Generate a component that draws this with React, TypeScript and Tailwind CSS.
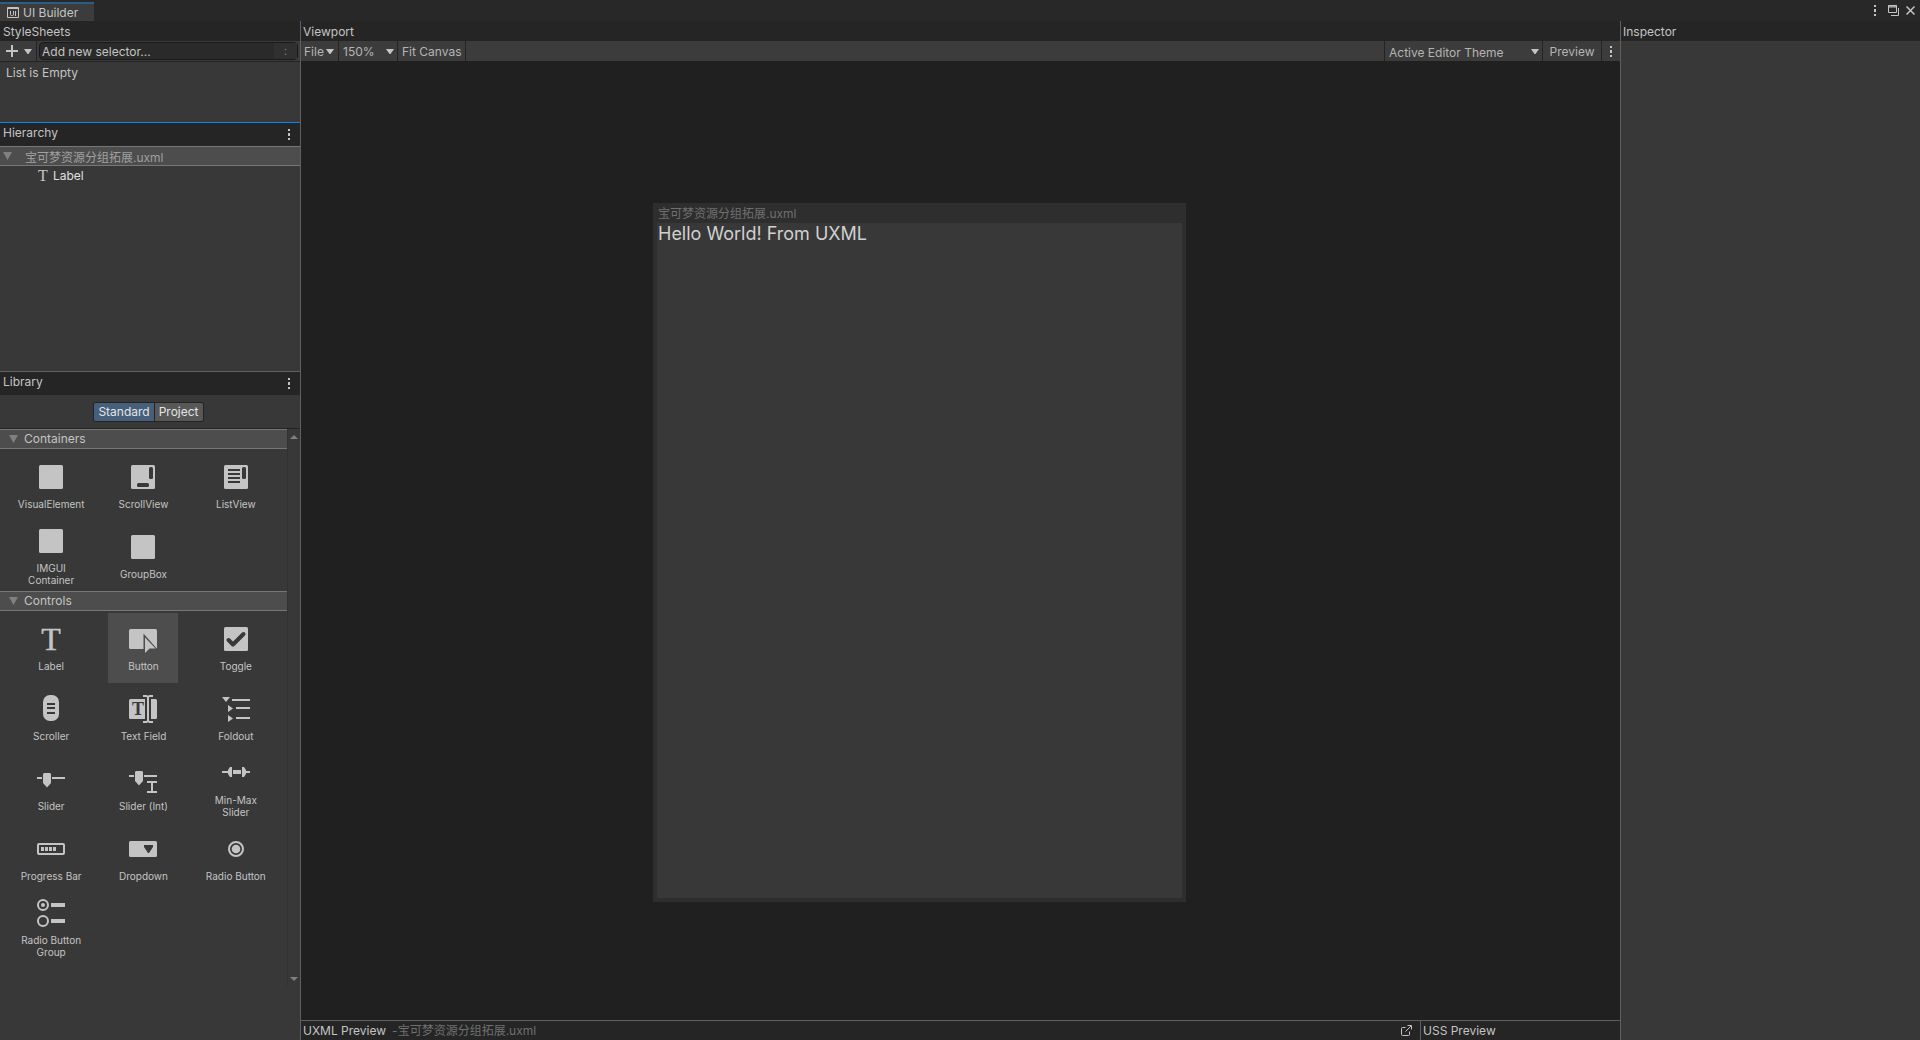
import { useState } from 'react';
import type { ReactNode } from 'react';

const FILE_NAME = '宝可梦资源分组拓展.uxml';

type LibraryItem = {
    key: string;
    label: string;
    icon: ReactNode;
};

const INK = '#c4c4c4';
const PANEL = '#383838';

const CONTAINERS: LibraryItem[] = [
    { key: 'visual-element', label: 'VisualElement', icon: <rect x="4" y="4" width="24" height="24" rx="1.5" /> },
    {
        key: 'scroll-view',
        label: 'ScrollView',
        icon: (
            <>
                <rect x="4" y="4" width="24" height="24" rx="1.5" />
                <rect x="22" y="6" width="4" height="12" rx="1.5" fill={PANEL} />
                <rect x="10" y="22" width="12" height="4" rx="1.5" fill={PANEL} />
            </>
        ),
    },
    {
        key: 'list-view',
        label: 'ListView',
        icon: (
            <>
                <rect x="4" y="4" width="24" height="24" rx="1.5" />
                <rect x="22" y="6" width="4" height="12" rx="1.5" fill={PANEL} />
                <path d="M8 9h12M8 13h12M8 17h12M8 21h12" stroke={PANEL} strokeWidth="2" />
            </>
        ),
    },
    { key: 'imgui', label: 'IMGUI Container', icon: <rect x="4" y="4" width="24" height="24" rx="1.5" /> },
    { key: 'group-box', label: 'GroupBox', icon: <rect x="4" y="4" width="24" height="24" rx="1.5" /> },
];

const CONTROLS: LibraryItem[] = [
    {
        key: 'label',
        label: 'Label',
        icon: <text x="16" y="27" fontSize="32" textAnchor="middle" fontFamily="Liberation Serif, serif" stroke={INK} strokeWidth="0.4">T</text>,
    },
    {
        key: 'button',
        label: 'Button',
        icon: (
            <>
                <rect x="2" y="6" width="28" height="20" rx="1.5" />
                <path d="M16.5 10.5V31h2.5l4.5-4H31z" fill="#4d4d4d" />
                <path d="M18 14.500V30l4.500-4.500H28.500z" />
                <path d="M19 11L30 22V12H19z" />
            </>
        ),
    },
    {
        key: 'toggle',
        label: 'Toggle',
        icon: (
            <>
                <rect x="4" y="4" width="24" height="24" rx="1.5" />
                <path d="M8.500 17l4.500 4.500L23.500 11" fill="none" stroke={PANEL} strokeWidth="4" strokeLinecap="round" strokeLinejoin="round" />
            </>
        ),
    },
    {
        key: 'scroller',
        label: 'Scroller',
        icon: (
            <>
                <rect x="8" y="2" width="16" height="26" rx="7" />
                <path d="M12 11h8M12 15h8M12 20h8" stroke={PANEL} strokeWidth="2" />
            </>
        ),
    },
    {
        key: 'text-field',
        label: 'Text Field',
        icon: (
            <>
                <rect x="2" y="6" width="28" height="20" rx="1.5" />
                <rect x="18" y="6" width="6" height="20" fill={PANEL} />
                <text x="11" y="22" fontSize="18" fontWeight="bold" textAnchor="middle" fill={PANEL} fontFamily="Liberation Serif, serif">T</text>
                <path d="M16 3h3.500l1.500 1l1.500-1H26M21 3v26M16 29h3.500l1.500-1l1.500 1H26" fill="none" stroke={INK} strokeWidth="2" />
            </>
        ),
    },
    {
        key: 'foldout',
        label: 'Foldout',
        icon: (
            <>
                <path d="M2 4h8L6 9zM8 12l5 3.500l-5 3.500zM8 22l5 3.500l-5 3.500z" />
                <path d="M12 7h18M16 15h14M16 25h14" stroke={INK} strokeWidth="2" />
            </>
        ),
    },
    {
        key: 'slider',
        label: 'Slider',
        icon: (
            <>
                <path d="M2 15h5M17 15h13" stroke={INK} strokeWidth="2" />
                <path d="M9 10h6l1 1v9l-4 4.500L8 20v-9z" />
            </>
        ),
    },
    {
        key: 'slider-int',
        label: 'Slider (Int)',
        icon: (
            <>
                <path d="M2 13h5M17 13h13" stroke={INK} strokeWidth="2" />
                <path d="M9 8h6l1 1v9l-4 4.500L8 18V9z" />
                <path d="M20 19h10M25 19v10M20 29h10" stroke={INK} strokeWidth="2" />
            </>
        ),
    },
    {
        key: 'min-max',
        label: 'Min-Max Slider',
        icon: (
            <>
                <path d="M2 15h6M24 15h6" stroke={INK} strokeWidth="2" />
                <path d="M12 10v10h-2l-2-3v-4l2-3zM22 10v10h2l2-3v-4l-2-3z" />
                <rect x="13" y="13" width="8" height="4" />
            </>
        ),
    },
    {
        key: 'progress-bar',
        label: 'Progress Bar',
        icon: (
            <>
                <rect x="3" y="11" width="26" height="10" rx="1" fill="none" stroke={INK} strokeWidth="2" />
                <path d="M6 14h3v4H6zM10 14h3v4h-3zM14 14h3v4h-3zM18 14h3v4h-3z" />
            </>
        ),
    },
    {
        key: 'dropdown',
        label: 'Dropdown',
        icon: (
            <>
                <rect x="2" y="8" width="28" height="16" rx="1.5" />
                <path d="M17 12h9v2l-4 6h-1l-4-6z" fill={PANEL} />
            </>
        ),
    },
    {
        key: 'radio-button',
        label: 'Radio Button',
        icon: (
            <>
                <circle cx="16" cy="16" r="7" fill="none" stroke={INK} strokeWidth="2" />
                <circle cx="16" cy="16" r="4.300" />
            </>
        ),
    },
    {
        key: 'radio-group',
        label: 'Radio Button Group',
        icon: (
            <>
                <circle cx="8" cy="8" r="5" fill="none" stroke={INK} strokeWidth="2" />
                <circle cx="8" cy="8" r="2" />
                <circle cx="8" cy="24" r="5" fill="none" stroke={INK} strokeWidth="2" />
                <path d="M16 6h14v4H16zM16 22h14v4H16z" />
            </>
        ),
    },
];

const Caret = ({ className = '' }: { className?: string }) => (
    <svg viewBox="0 0 8 5" className={`w-2 h-[5px] fill-[#c4c4c4] ${className}`} aria-hidden="true">
        <path d="M0 0h8L4.500 5h-1z" />
    </svg>
);

const Dots = () => (
    <svg viewBox="0 0 3 11" className="w-[3px] h-[11px] fill-[#c4c4c4]" aria-hidden="true">
        <path d="M0 0h2v2H0zM0 4h2v3H0zM0 9h2v2H0z" />
    </svg>
);

const FoldTriangle = () => (
    <svg viewBox="0 0 9 8" className="w-[9px] h-2 fill-[#808080]" aria-hidden="true">
        <path d="M0 0h9L4.500 8z" />
    </svg>
);

const PanelHeader = ({ title }: { title: string }) => (
    <div className="flex h-[23px] shrink-0 items-center justify-between bg-[#252525] pl-[3px] pr-[9px]">
        <h2 className="pb-[3px]">{title}</h2>
        <button type="button" aria-label={`${title} menu`}>
            <Dots />
        </button>
    </div>
);

const LibrarySection = ({ title, items, active, onSelect }: {
    title: string;
    items: LibraryItem[];
    active: string;
    onSelect: (key: string) => void;
}) => (
    <section>
        <button type="button" className="flex h-5 w-full items-center gap-1.5 border-y border-[#777777] bg-[#4d4d4d] pl-[9px]">
            <FoldTriangle />
            {title}
        </button>
        <ul className="grid grid-cols-3 justify-items-center px-[5px] pt-0.5">
            {items.map((item) => (
                <li key={item.key}>
                    <button
                        type="button"
                        onClick={() => onSelect(item.key)}
                        className={`flex size-[70px] flex-col items-center justify-center gap-[5px] pb-px text-[10px] leading-3 ${active === item.key ? 'bg-[#4d4d4d]' : ''}`}
                    >
                        <svg viewBox="0 0 32 32" className="size-8 shrink-0 overflow-visible fill-[#c4c4c4]" aria-hidden="true">{item.icon}</svg>
                        <span>{item.label}</span>
                    </button>
                </li>
            ))}
        </ul>
    </section>
);

const Sidebar = () => {
    const [tab, setTab] = useState('Standard');
    const [active, setActive] = useState('button');

    return (
        <aside className="flex w-[301px] shrink-0 flex-col border-r border-[#5f5f5f] bg-[#383838]">
            <section className="h-[102px] shrink-0 border-b border-[#0a84f0]">
                <h2 className="h-5 bg-[#252525] pl-[3px] leading-[22px]">StyleSheets</h2>
                <div className="flex h-[21px] border-b border-[#232323] bg-[#3c3c3c]">
                    <button type="button" aria-label="Add style sheet" className="flex w-[37px] items-center gap-1.5 border-r border-[#232323] pl-1.5">
                        <svg viewBox="0 0 12 12" className="size-3 fill-[#c4c4c4]" aria-hidden="true">
                            <path d="M5 0h2v5h5v2H7v5H5V7H0V5h5z" />
                        </svg>
                        <Caret />
                    </button>
                    <div className="mx-0.5 my-px flex grow items-center rounded-sm border border-[#191919] bg-[#2a2a2a]">
                        <input
                            aria-label="Add new selector"
                            placeholder="Add new selector..."
                            className="min-w-0 grow bg-transparent pl-0.5 pt-px outline-none placeholder:text-[#c4c4c4]"
                        />
                        <button type="button" aria-label="Pseudo states" className="h-4 w-[23px] bg-[#303030] leading-3 text-[#777777]">:</button>
                    </div>
                </div>
                <p className="pl-1.5 pt-[3px] leading-4">List is Empty</p>
            </section>

            <section className="flex h-[248px] shrink-0 flex-col">
                <PanelHeader title="Hierarchy" />
                <ul>
                    <li className="flex h-5 items-center border-y border-[#777777] bg-[#4d4d4d] pl-[3px] text-[#a0a0a0]">
                        <FoldTriangle />
                        <span className="pl-[13px] pt-1 leading-4">{FILE_NAME}</span>
                    </li>
                    <li className="flex h-5 items-center gap-1 pl-[37px] text-[#e0e0e0]">
                        <svg viewBox="0 0 12 12" className="size-3 overflow-visible fill-[#c4c4c4]" aria-hidden="true">
                            <text x="6" y="11" fontSize="16" textAnchor="middle" fontFamily="Liberation Serif, serif">T</text>
                        </svg>
                        Label
                    </li>
                </ul>
            </section>

            <section className="flex min-h-0 grow flex-col border-t border-[#5f5f5f]">
                <PanelHeader title="Library" />
                <div className="flex h-[34px] shrink-0 items-center justify-center border-b border-[#232323] pr-[3px]">
                    <div className="flex h-5 overflow-hidden rounded-[3px] border border-[#232323] text-[#e4e4e4]">
                        {['Standard', 'Project'].map((name) => (
                            <button
                                key={name}
                                type="button"
                                onClick={() => setTab(name)}
                                className={`border-l border-[#232323] px-1 first:border-l-0 ${tab === name ? 'bg-[#46607c]' : 'bg-[#585858]'}`}
                            >
                                {name}
                            </button>
                        ))}
                    </div>
                </div>
                <div className="mb-[54px] flex min-h-0 grow">
                    <div className="min-w-0 grow overflow-hidden">
                        <LibrarySection title="Containers" items={CONTAINERS} active={active} onSelect={setActive} />
                        <LibrarySection title="Controls" items={CONTROLS} active={active} onSelect={setActive} />
                    </div>
                    <div className="flex w-[13px] shrink-0 flex-col items-center justify-between border-l border-[#323232] pb-[5px] pt-1.5">
                        <svg viewBox="0 0 8 4" className="h-1 w-2 fill-[#808080]" aria-hidden="true"><path d="M0 4h8L4 0z" /></svg>
                        <svg viewBox="0 0 8 4" className="h-1 w-2 fill-[#808080]" aria-hidden="true"><path d="M0 0h8L4 4z" /></svg>
                    </div>
                </div>
            </section>
        </aside>
    );
};

const Viewport = () => (
    <main className="flex min-w-0 grow flex-col bg-[#202020]">
        <h2 className="h-5 shrink-0 bg-[#252525] pl-0.5 leading-[22px]">Viewport</h2>
        <div className="flex h-5 shrink-0 bg-[#3c3c3c] text-[#b4b4b4]">
            <button type="button" className="flex w-[38px] items-center gap-0.5 border-r border-[#232323] pl-[3px] pt-px">
                File
                <Caret />
            </button>
            <label className="grid w-[59px] items-center border-r border-[#232323]">
                <select aria-label="Zoom" className="col-start-1 row-start-1 h-5 appearance-none bg-transparent pl-1 pt-px outline-none">
                    <option>150%</option>
                </select>
                <Caret className="col-start-1 row-start-1 mr-[3px] justify-self-end" />
            </label>
            <button type="button" className="border-r border-[#232323] px-1 pt-px">Fit Canvas</button>
            <div className="grow" />
            <label className="grid w-[159px] items-center border-x border-[#232323]">
                <select aria-label="Theme" className="col-start-1 row-start-1 h-5 appearance-none bg-transparent pl-1 pt-[3px] outline-none">
                    <option>Active Editor Theme</option>
                </select>
                <Caret className="col-start-1 row-start-1 mr-[3px] justify-self-end" />
            </label>
            <button type="button" className="w-[59px] border-r border-[#232323] pt-px">Preview</button>
            <button type="button" aria-label="Viewport options" className="flex w-[18px] items-center justify-center">
                <Dots />
            </button>
        </div>

        <div className="min-h-0 grow overflow-hidden pl-[352px] pt-[142px]">
            <div className="flex h-[699px] w-[533px] flex-col bg-[#2e2e2e] px-1 pb-1">
                <div className="h-5 shrink-0 pl-px leading-[22px] text-[#707070]">{FILE_NAME}</div>
                <div className="grow bg-[#383838] pl-px text-[18px] leading-[22px] text-[#d0d0d0]">Hello World! From UXML</div>
            </div>
        </div>

        <footer className="flex h-5 shrink-0 border-t border-[#5f5f5f] bg-[#252525] leading-[22px]">
            <div className="flex grow items-center pl-0.5 pr-2">
                <h2>UXML Preview</h2>
                <span className="grow pl-1.5 text-[#707070]">-{FILE_NAME}</span>
                <button type="button" aria-label="Open in editor">
                    <svg viewBox="0 0 11 11" className="size-[11px]" fill="none" stroke="#c4c4c4" aria-hidden="true">
                        <path d="M4.500 2.500h-3a1 1 0 0 0-1 1v6a1 1 0 0 0 1 1h6a1 1 0 0 0 1-1v-3M4.500 6.500L10 1M6.500 .5h4v4" />
                    </svg>
                </button>
            </div>
            <h2 className="w-[200px] border-l border-[#5f5f5f] pl-0.5 leading-5">USS Preview</h2>
        </footer>
    </main>
);

const App = () => (
    <div className="flex h-screen flex-col overflow-hidden bg-[#282828] font-['Inter','Noto_Sans_CJK_SC',sans-serif] text-[12px] leading-4 text-[#c4c4c4]">
        <header className="flex h-[21px] shrink-0 items-end justify-between">
            <h1 className="flex h-[19px] w-[94px] items-center gap-1 border-t-2 border-[#2c5d87] bg-[#3c3c3c] pl-[7px]">
                <svg viewBox="0 0 12 11" className="h-[11px] w-3" fill="none" stroke="#c4c4c4" aria-hidden="true">
                    <path d="M.5 .5h11v10H.5zM0 1.500h12M3.500 4v3.500q0 1 1 1h1q1 0 1-1V4M8.500 4v5" />
                </svg>
                UI Builder
            </h1>
            <div className="flex h-[21px] items-center gap-[7px] pr-[5px]">
                <button type="button" aria-label="Window menu" className="pr-1"><Dots /></button>
                <button type="button" aria-label="Maximize">
                    <svg viewBox="0 0 11 11" className="size-[11px]" fill="none" stroke="#c4c4c4" aria-hidden="true">
                        <path d="M.5 .5h8v7h-8zM0 2h9M0 1h9M10.500 3v7.500H3" />
                    </svg>
                </button>
                <button type="button" aria-label="Close">
                    <svg viewBox="0 0 9 9" className="size-[9px]" stroke="#c4c4c4" strokeWidth="1.500" aria-hidden="true">
                        <path d="M.5 .5l8 8M8.500 .5l-8 8" />
                    </svg>
                </button>
            </div>
        </header>
        <div className="flex min-h-0 grow">
            <Sidebar />
            <Viewport />
            <aside className="w-[300px] shrink-0 border-l border-[#5f5f5f] bg-[#383838]">
                <h2 className="h-5 bg-[#252525] pl-0.5 leading-[22px]">Inspector</h2>
            </aside>
        </div>
    </div>
);

export default App;
